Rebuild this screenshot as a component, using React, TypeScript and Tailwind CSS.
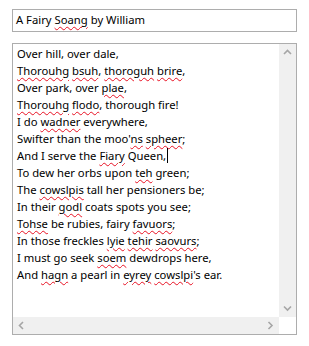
import React from 'react';

// words marked by the spell checker are wrapped in [ ]
const lines = [
  'Over hill, over dale,',
  '[Thorouhg] [bsuh], [thoroguh] [brire],',
  'Over park, over [plae],',
  '[Thorouhg] [flodo], thorough fire!',
  'I do [wadner] everywhere,',
  "Swifter than the moo'[ns] [spheer];",
  'And I serve the [Fiary] Queen,',
  'To dew her orbs upon [teh] green;',
  'The [cowslpis] tall her pensioners be;',
  'In their [godl] coats spots you see;',
  '[Tohse] be rubies, fairy [favuors];',
  'In those freckles [lyie] [tehir] [saovurs];',
  'I must go seek [soem] dewdrops here,',
  "And [hagn] a pearl in [eyrey] [cowslpi]'s ear.",
];

const Squiggle = ({ children }: { children: React.ReactNode }) => (
  <span className="underline decoration-wavy decoration-[#e81123] decoration-1 underline-offset-[2px]">
    {children}
  </span>
);

const renderLine = (line: string) =>
  line.split(/(\[[^\]]+\])/).map((part, i) =>
    part.startsWith('[') ? <Squiggle key={i}>{part.slice(1, -1)}</Squiggle> : <span key={i}>{part}</span>
  );

const Chevron = ({ dir }: { dir: 'up' | 'down' | 'left' | 'right' }) => {
  const d = {
    up: 'M1 5 L4.5 1.5 L8 5',
    down: 'M1 1.5 L4.5 5 L8 1.5',
    left: 'M5 1 L1.5 4.5 L5 8',
    right: 'M1.5 1 L5 4.5 L1.5 8',
  }[dir];
  const horiz = dir === 'up' || dir === 'down';
  return (
    <svg width={horiz ? 9 : 7} height={horiz ? 7 : 9} viewBox={horiz ? '0 0 9 7' : '0 0 7 9'}>
      <path d={d} fill="none" stroke="#a6a6a6" strokeWidth="1.6" />
    </svg>
  );
};

export default function App() {
  return (
    <div className="w-[309px] h-[346px] bg-white pl-[12px] pt-[9px] font-['Noto_Sans',sans-serif] text-[11.25px] text-black">
      {/* Title input */}
      <div className="w-[285px] h-[23px] border border-[#adadad] flex items-center pl-[3px]">
        A Fairy <span className="mx-[3px]"><Squiggle>Soang</Squiggle></span> by William
      </div>

      {/* Poem text area */}
      <div className="mt-[11px] w-[285px] h-[292px] border border-[#adadad] flex flex-col">
        <div className="flex flex-1 min-h-0">
          <div className="flex-1 pl-[4px] pt-[1px] leading-[17px] whitespace-pre">
            {lines.map((line, i) => (
              <div key={i} className="flex items-center">
                <span>{renderLine(line)}</span>
                {i === 6 && <span className="inline-block w-px h-[15px] bg-black ml-px" />}
              </div>
            ))}
          </div>
          <div className="w-[17px] bg-[#f0f0f0] flex flex-col justify-between items-center py-[5px]">
            <Chevron dir="up" />
            <Chevron dir="down" />
          </div>
        </div>
        <div className="flex h-[17px]">
          <div className="flex-1 bg-[#f0f0f0] flex justify-between items-center px-[5px]">
            <Chevron dir="left" />
            <Chevron dir="right" />
          </div>
          <div className="w-[17px] bg-white" />
        </div>
      </div>
    </div>
  );
}
